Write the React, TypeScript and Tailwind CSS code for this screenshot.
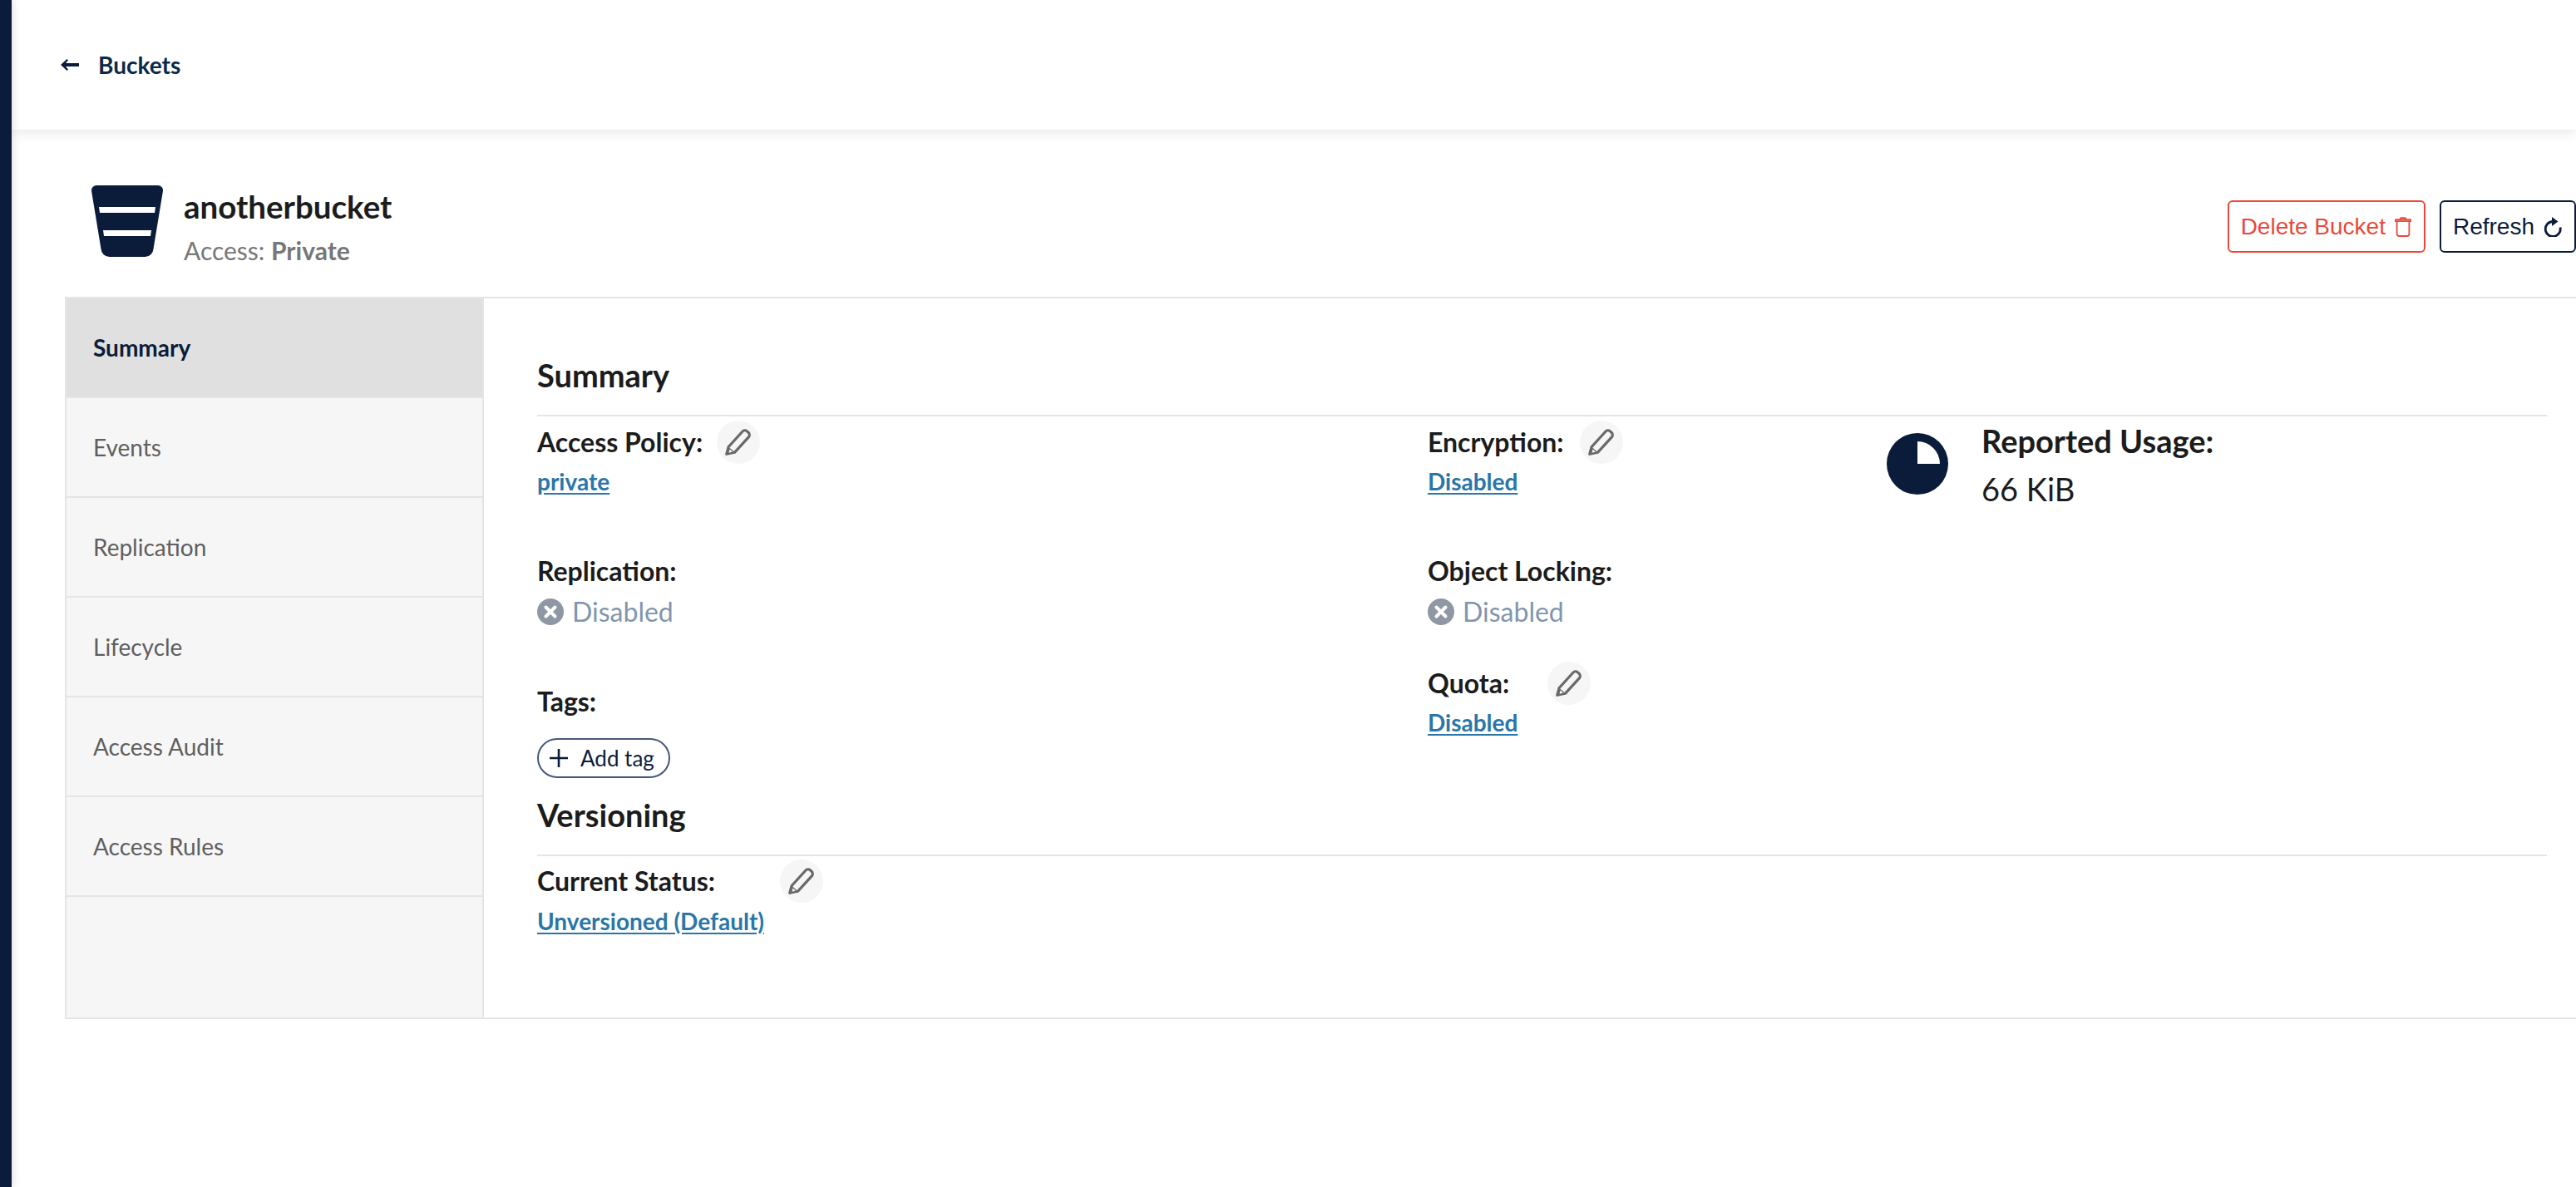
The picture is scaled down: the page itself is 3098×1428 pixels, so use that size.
const lato = "font-['Lato',sans-serif]";

function BackIcon() {
  return (
    <svg viewBox="0 0 22 16" className="h-[16px] w-[22px]" fill="#0b1c3a">
      <path d="M7.500 1 0 8l7.500 7 1.500-1.500L6 10h16V6H6l3-3.500z" />
    </svg>
  );
}

function BucketIcon() {
  return (
    <svg viewBox="0 0 86 86" className="h-[86px] w-[86px] shrink-0">
      <path
        fill="#0b1c3a"
        d="M6 0h74a6 6 0 0 1 6 6.500L74.500 76.500A10 10 0 0 1 64.500 86h-43a10 10 0 0 1-10-9.500L0 6.500A6 6 0 0 1 6 0z"
      />
      <path fill="#fff" d="M9 26h68l-1 7H10zM14 54h58l-1 7H15z" />
    </svg>
  );
}

function TrashIcon() {
  return (
    <svg viewBox="0 0 20 24" className="h-[24px] w-[20px]" fill="none" stroke="#e8493a" strokeWidth="1.800">
      <path d="M1.500 3.200h17a.8.8 0 0 1 .8.800v1.200H.7V4a.8.8 0 0 1 .8-.8z" />
      <path d="M6.500 3l.8-1.800h5.400L13.500 3" />
      <path d="M2.600 5.200v15a2.800 2.800 0 0 0 2.800 2.800h9.200a2.800 2.800 0 0 0 2.800-2.800v-15" />
    </svg>
  );
}

function RefreshIcon() {
  return (
    <svg viewBox="0 0 22 24" className="h-[24px] w-[22px]" fill="none">
      <path d="M20 12.500A9 9 0 1 1 11 5.500" stroke="#0b1c3a" strokeWidth="2.800" />
      <path d="M10 0 17.500 5.500 10 11z" fill="#0b1c3a" />
    </svg>
  );
}

function PencilButton({ className }: { className: string }) {
  return (
    <span className={`flex h-[52px] w-[52px] shrink-0 items-center justify-center rounded-full bg-[#f6f6f6] ${className}`}>
      <svg viewBox="0 0 32 32" className="h-[32px] w-[32px]" fill="none">
        <path
          d="M1.800 30.200 4 21.800 20.800 3.200a4 4 0 0 1 5.600-.300l1.600 1.400a4 4 0 0 1 .300 5.600L11.400 28.300z"
          stroke="#696969"
          strokeWidth="3.200"
          strokeLinejoin="round"
        />
        <path d="M0.500 31.500l3-10.600 8.500 7.600z" fill="#696969" />
        <path d="M5.500 24.500l3.500 3-4.500 1.200z" fill="#f6f6f6" />
      </svg>
    </span>
  );
}

function DisabledIcon() {
  return (
    <svg viewBox="0 0 32 32" className="h-[32px] w-[32px] shrink-0">
      <circle cx="16" cy="16" r="16" fill="#8e97a3" />
      <path d="M10.500 10.500l11 11M21.500 10.500l-11 11" stroke="#fff" strokeWidth="4" strokeLinecap="round" />
    </svg>
  );
}

function UsageIcon() {
  return (
    <svg viewBox="0 0 74 74" className="h-[74px] w-[74px] shrink-0">
      <circle cx="37" cy="37" r="37" fill="#0b1c3a" />
      <path d="M37 37V10A27 27 0 0 1 64 37z" fill="#fff" />
    </svg>
  );
}

function Label({ children }: { children: string }) {
  return <span className="text-[32px] leading-[52px] font-bold text-[#1c1c1c]">{children}</span>;
}

function ValueLink({ children }: { children: string }) {
  return (
    <a className="mt-[3px] block text-[28px] leading-[36px] font-bold text-[#2a76a8] underline underline-offset-[3px]">
      {children}
    </a>
  );
}

function DisabledValue() {
  return (
    <div className="mt-[1px] flex h-[44px] items-center gap-[10px] text-[32px] text-[#7f96ae]">
      <DisabledIcon />
      <span>Disabled</span>
    </div>
  );
}

function SectionTitle({ title }: { title: string }) {
  return (
    <div className="flex h-[66px] items-start border-b-2 border-[#e5e5e5]">
      <h2 className="-mt-[7px] text-[38px] leading-[46px] font-bold text-[#1c1c1c]">{title}</h2>
    </div>
  );
}

const tabs = ["Events", "Replication", "Lifecycle", "Access Audit", "Access Rules"];

export default function App() {
  return (
    <div className={`flex h-[1428px] w-[3098px] overflow-hidden bg-white ${lato}`}>
      <aside className="z-20 w-[14px] shrink-0 bg-[#0b1c3a] shadow-[2px_0_10px_rgba(0,0,0,0.12)]" />
      <main className="min-w-0 flex-1">
        <header className="relative z-10 flex h-[156px] items-center bg-white pl-[59px] shadow-[0_4px_14px_rgba(0,0,0,0.09)]">
          <BackIcon />
          <span className="ml-[23px] text-[28px] font-bold text-[#0b2a4a]">Buckets</span>
        </header>

        <section className="flex h-[201px] pt-[67px] pl-[96px]">
          <BucketIcon />
          <div className="ml-[25px] min-w-0">
            <h1 className="-mt-[5px] text-[38.500px] leading-[60px] font-bold text-[#1c1c1c]">anotherbucket</h1>
            <p className="mt-[3px] text-[30px] leading-[40px] text-[#777777]">
              Access: <span className="font-bold">Private</span>
            </p>
          </div>
          <div className="ml-auto mt-[18px] flex h-[63px] gap-[17px] font-['Liberation_Sans',sans-serif] text-[28px]">
            <button className="flex items-center gap-[11px] rounded-[6px] border-2 border-[#e8493a] pr-[15px] pl-[14px] text-[#e8493a]">
              Delete Bucket
              <TrashIcon />
            </button>
            <button className="flex items-center gap-[11px] rounded-[6px] border-2 border-[#0b1c3a] pr-[15px] pl-[14px] text-[#0b1c3a]">
              Refresh
              <RefreshIcon />
            </button>
          </div>
        </section>

        <div className="ml-[64px] flex h-[869px] border-y-2 border-[#e5e5e5]">
          <nav className="w-[504px] shrink-0 border-x-2 border-[#e5e5e5] bg-[#f6f6f6]">
            <div className="flex h-[120px] items-center border-b-2 border-[#e5e5e5] bg-[#e0e0e0] pl-[32px] text-[28px] font-bold text-[#0b1c3a]">
              Summary
            </div>
            {tabs.map((tab) => (
              <div
                key={tab}
                className="flex h-[120px] items-center border-b-2 border-[#e5e5e5] pl-[32px] text-[28px] text-[#5f5f5f]"
              >
                {tab}
              </div>
            ))}
          </nav>

          <div className="min-w-0 flex-1 pt-[76px] pr-[35px] pl-[64px]">
            <SectionTitle title="Summary" />
            <div className="flex h-[463px]">
              <div className="w-[1071px] shrink-0 pt-[5px]">
                <div className="flex h-[52px] items-center">
                  <Label>Access Policy:</Label>
                  <PencilButton className="ml-[17px]" />
                </div>
                <ValueLink>private</ValueLink>
                <div className="mt-[64px]">
                  <Label>Replication:</Label>
                  <DisabledValue />
                </div>
                <div className="mt-[60px]">
                  <Label>Tags:</Label>
                  <div className="mt-[18px] flex h-[48px] w-[160px] items-center rounded-full border-2 border-[#46587a] pl-[13px] text-[26px] text-[#0b1c3a]">
                    <svg viewBox="0 0 22 22" className="h-[22px] w-[22px]" stroke="#0b1c3a" strokeWidth="2.600">
                      <path d="M11 0v22M0 11h22" />
                    </svg>
                    <span className="ml-[15px]">Add tag</span>
                  </div>
                </div>
              </div>

              <div className="w-[552px] shrink-0 pt-[5px]">
                <div className="flex h-[52px] items-center">
                  <Label>Encryption:</Label>
                  <PencilButton className="ml-[19px]" />
                </div>
                <ValueLink>Disabled</ValueLink>
                <div className="mt-[64px]">
                  <Label>Object Locking:</Label>
                  <DisabledValue />
                </div>
                <div className="mt-[38px] flex h-[52px] items-center">
                  <Label>Quota:</Label>
                  <PencilButton className="ml-[46px]" />
                </div>
                <ValueLink>Disabled</ValueLink>
              </div>

              <div className="flex min-w-0 flex-1 pt-[20px]">
                <UsageIcon />
                <div className="-mt-[18px] ml-[40px] text-[#1c1c1c]">
                  <div className="text-[38px] leading-[54px] font-bold">Reported Usage:</div>
                  <div className="text-[38px] leading-[62px]">66 KiB</div>
                </div>
              </div>
            </div>

            <SectionTitle title="Versioning" />
            <div className="mb-[7px] flex h-[53px] items-center pt-[7px]">
              <Label>Current Status:</Label>
              <PencilButton className="ml-[78px]" />
            </div>
            <ValueLink>Unversioned (Default)</ValueLink>
          </div>
        </div>
      </main>
    </div>
  );
}
